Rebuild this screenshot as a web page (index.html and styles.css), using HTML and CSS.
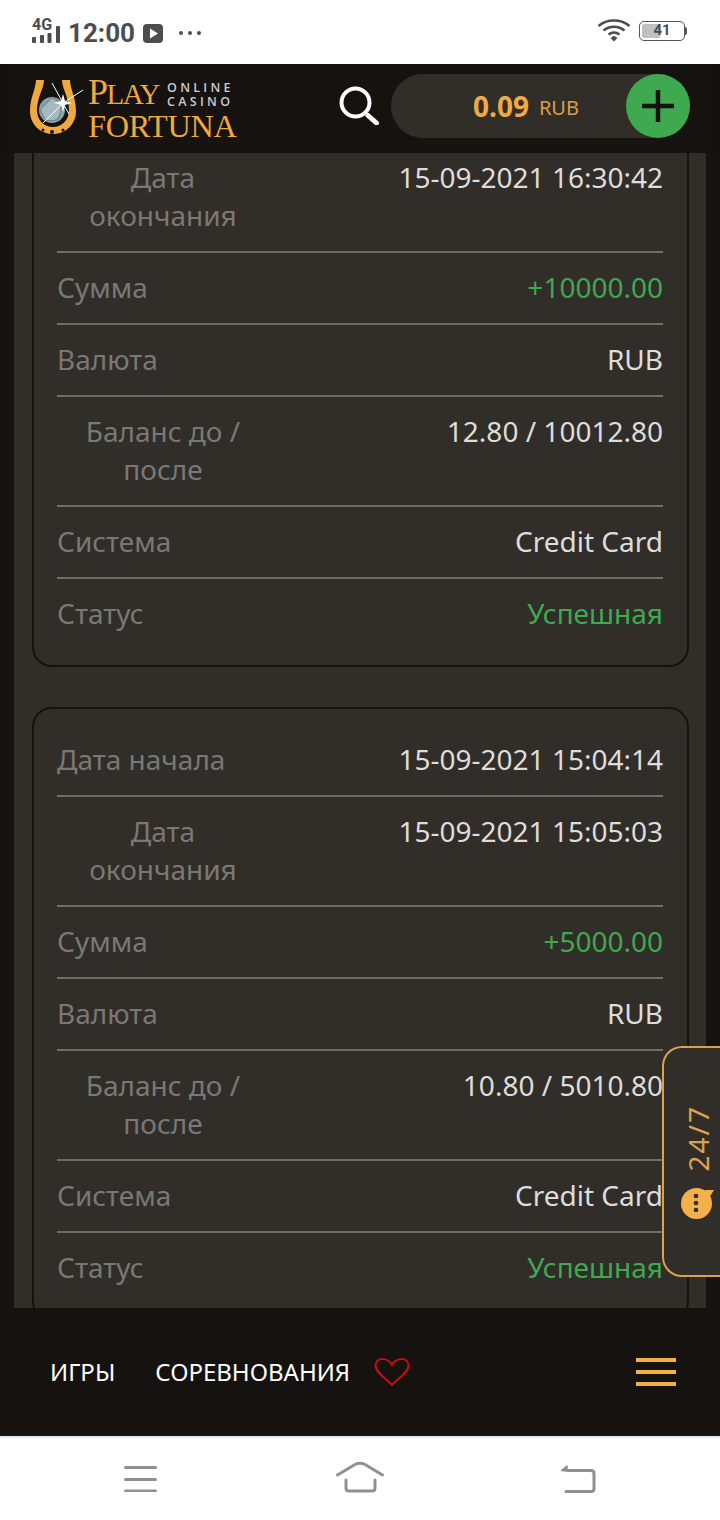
FILE: index.html
```html
<!DOCTYPE html>
<html lang="ru">
<head>
<meta charset="utf-8">
<title>Play Fortuna</title>
<link rel="stylesheet" href="styles.css">
</head>
<body>
<div class="phone">
  <div class="statusbar">
    <div class="status-left">
      <svg class="signal" width="30" height="26" viewBox="0 0 30 26">
        <text class="signal-text" x="0" y="11">4G</text>
        <rect x="0" y="18" width="4" height="6" rx="1"/>
        <rect x="8" y="16" width="4" height="8" rx="1"/>
        <rect x="15.500" y="14" width="4" height="10" rx="1"/>
        <rect x="24" y="7" width="4" height="17" rx="1"/>
      </svg>
      <span class="clock">12:00</span>
      <svg class="play" width="20" height="19" viewBox="0 0 20 19">
        <rect width="20" height="19" rx="4" fill="#4d4d4d"/>
        <path d="M7 4.500 15 9.500 7 14.500Z" fill="#fff"/>
      </svg>
      <svg class="dots" width="22" height="4" viewBox="0 0 22 4">
        <circle cx="2" cy="2" r="2"/><circle cx="11" cy="2" r="2"/><circle cx="20" cy="2" r="2"/>
      </svg>
    </div>
    <div class="status-right">
      <svg width="34" height="24" viewBox="0 0 34 24" fill="none" stroke="#4d4d4d" stroke-width="2.600">
        <path d="M1.500 8C10 .6 24 .6 32.500 8"/>
        <path d="M6.500 12.500C12.500 7.400 21.500 7.400 27.500 12.500"/>
        <path d="M11.500 16.500C15 14 19 14 22.500 16.500"/>
        <path d="M13.500 20 17 17.800 20.500 20 17 23.500Z" fill="#4d4d4d" stroke="none"/>
      </svg>
      <div class="battery"><span class="battery-fill"></span><span class="battery-num">41</span></div>
      <span class="battery-cap"></span>
    </div>
  </div>

  <div class="viewport">
    <main class="panel">
      <section class="card card-first">
        <div class="row"><span class="label">Дата начала</span><span class="value">15-09-2021 16:29:58</span></div>
        <div class="row"><span class="label">Дата окончания</span><span class="value">15-09-2021 16:30:42</span></div>
        <div class="row"><span class="label">Сумма</span><span class="value green">+10000.00</span></div>
        <div class="row"><span class="label">Валюта</span><span class="value">RUB</span></div>
        <div class="row"><span class="label">Баланс до / после</span><span class="value">12.80 / 10012.80</span></div>
        <div class="row"><span class="label">Система</span><span class="value">Credit Card</span></div>
        <div class="row"><span class="label">Статус</span><span class="value green">Успешная</span></div>
      </section>
      <section class="card">
        <div class="row"><span class="label">Дата начала</span><span class="value">15-09-2021 15:04:14</span></div>
        <div class="row"><span class="label">Дата окончания</span><span class="value">15-09-2021 15:05:03</span></div>
        <div class="row"><span class="label">Сумма</span><span class="value green">+5000.00</span></div>
        <div class="row"><span class="label">Валюта</span><span class="value">RUB</span></div>
        <div class="row"><span class="label">Баланс до / после</span><span class="value">10.80 / 5010.80</span></div>
        <div class="row"><span class="label">Система</span><span class="value">Credit Card</span></div>
        <div class="row"><span class="label">Статус</span><span class="value green">Успешная</span></div>
      </section>
    </main>

    <header class="topbar">
      <div class="logo">
        <svg class="shoe" width="46" height="56" viewBox="0 0 46 56">
          <path fill="#efa93f" d="M6 0H14C14 8 7 18 7 30C7 40 14 47 23 47C32 47 39 40 39 30C39 18 32 8 32 0H40C40 8 46 18 46 31C46 44 36 54 23 54C10 54 0 44 0 31C0 18 6 8 6 0Z"/>
          <circle cx="13" cy="50" r="1.500" fill="#15120f"/>
          <circle cx="22" cy="52" r="2" fill="#15120f"/>
          <circle cx="33" cy="50" r="1.500" fill="#15120f"/>
          <circle cx="22" cy="30" r="13" fill="#8a9fa6"/>
          <path d="M22 19 29 24 31 33 24 41 14 39 11 29Z" fill="#a6b9be"/>
          <path d="M22 17 33 23 28 40 16 41 10 30Z" fill="none" stroke="#6f858c" stroke-width="1"/>
          <path d="M22 3 33 23M53 10 33 23M13 43 33 23M39 34 33 23" stroke="#fff" stroke-width="1" fill="none"/>
          <path d="M33 14 35 21 42 23 35 25 33 32 31 25 24 23 31 21Z" fill="#fff"/>
        </svg>
        <div class="wordmark">
          <div class="word-top">
            <span class="word-play"><span class="big-p">P</span>LAY</span>
            <span class="word-sub"><span>ONLINE</span><span>CASINO</span></span>
          </div>
          <div class="word-fortuna">FORTUNA</div>
        </div>
      </div>
      <svg class="search" width="44" height="44" viewBox="0 0 44 44" fill="none" stroke="#fff" stroke-linecap="round">
        <circle cx="18.500" cy="21.500" r="14" stroke-width="4"/>
        <path d="M31 34.500 39.500 42" stroke-width="5"/>
      </svg>
      <div class="balance">
        <span class="amount">0.09</span>
        <span class="currency">RUB</span>
        <span class="add">
          <svg width="32" height="32" viewBox="0 0 32 32"><path d="M0 16H32M16 0V32" stroke="#15120f" stroke-width="4.500"/></svg>
        </span>
      </div>
    </header>

    <aside class="support">
      <span class="support-text">24/7</span>
      <svg width="33" height="33" viewBox="0 0 33 33">
        <circle cx="15.500" cy="17.500" r="15.500" fill="#f4b04b"/>
        <path d="M24 4H33L28 12Z" fill="#f4b04b"/>
        <circle cx="15" cy="10" r="2.300" fill="#312e2a"/><circle cx="15" cy="17" r="2.300" fill="#312e2a"/><circle cx="15" cy="24" r="2.300" fill="#312e2a"/>
      </svg>
    </aside>
  </div>

  <footer class="tabbar">
    <nav class="tabs">
      <a class="tab">ИГРЫ</a>
      <a class="tab">СОРЕВНОВАНИЯ</a>
      <svg class="heart" width="36" height="28" viewBox="0 0 36 28" fill="none" stroke="#c80d0d" stroke-width="2">
        <path d="M18 27C11 20 1.500 14 1.500 7.500C1.500 3.500 4.500 1 8.500 1C12.500 1 16 3.500 18 7C20 3.500 23.500 1 27.500 1C31.500 1 34.500 3.500 34.500 7.500C34.500 14 25 20 18 27Z"/>
      </svg>
    </nav>
    <div class="burger"><span></span><span></span><span></span></div>
  </footer>

  <div class="navbar">
    <svg width="33" height="26" viewBox="0 0 33 26" stroke="#909090" stroke-width="3" stroke-linecap="round"><path d="M1.500 1.500H31.500M1.500 13.500H31.500M1.500 25H31.500"/></svg>
    <svg class="nav-home" width="48" height="32" viewBox="0 0 48 32" fill="none" stroke="#909090" stroke-width="3" stroke-linecap="round" stroke-linejoin="round"><path d="M1.500 14 19 3.500Q24 1 29 3.500L46.500 14"/><path d="M10 19V27Q10 30 13 30H36Q39 30 39 27V19"/></svg>
    <svg width="36" height="28" viewBox="0 0 36 28" fill="none" stroke="#909090" stroke-width="3" stroke-linecap="round" stroke-linejoin="round"><path d="M8 5.500H31Q34 5.500 34 8.500V24Q34 26.500 31 26.500H6"/><path d="M7 1 1.500 5.500 7 6Z" fill="#909090" stroke-width="1.500"/></svg>
  </div>
</div>
</body>
</html>
```
FILE: styles.css
```css
* { box-sizing: border-box; }
html, body { margin: 0; padding: 0; }
body { background: #15120f; font-family: "Noto Sans", "Open Sans", sans-serif; }

.phone { width: 720px; height: 1520px; display: flex; flex-direction: column; overflow: hidden; }

/* status bar */
.statusbar { height: 64px; flex: none; background: #fff; display: flex; justify-content: space-between; align-items: center; padding: 0 33px 0 32px; color: #4d4d4d; }
.status-left, .status-right { display: flex; align-items: center; }
.signal { fill: #4d4d4d; overflow: visible; }
.signal-text { font: 700 16px Roboto, sans-serif; }
.clock { font: 700 26px/1 Roboto, sans-serif; margin-left: 6px; margin-top: 2px; }
.play { margin-left: 8px; margin-top: 2px; }
.dots { fill: #4d4d4d; margin-left: 16px; margin-top: 2px; }
.status-right svg { margin-right: 8px; margin-top: -4px; }
.battery { position: relative; width: 46px; height: 20px; border: 1.500px solid #555; border-radius: 5px; padding: 2px; display: flex; margin-top: -2px; }
.battery-fill { width: 18px; background: #c0c0c0; border-radius: 2px 0 0 2px; }
.battery-num { position: absolute; left: 0; right: 0; top: 0; text-align: center; font: 700 15px/17px Roboto, sans-serif; color: #4d4d4d; }
.battery-cap { width: 2px; height: 8px; background: #555; border-radius: 0 2px 2px 0; margin-top: -2px; }

/* scrolling area */
.viewport { position: relative; flex: 1; min-height: 0; overflow: hidden; }
.panel { height: 100%; margin: 0 14px; padding: 0 17px 0 18px; background: #312e2a; overflow: hidden; display: flex; flex-direction: column; gap: 40px; }
.card { flex: none; border: 2px solid #15120f; border-radius: 20px; padding: 16px 24px 16px 23px; }
.card-first { margin-top: -11px; }
.row { display: flex; justify-content: space-between; align-items: flex-start; padding: 15px 0 17px; border-bottom: 2px solid #6e6b68; font-size: 28px; line-height: 38px; }
.row:last-child { border-bottom: 0; }
.label { max-width: 212px; text-align: center; color: #7a7875; }
.value { text-align: right; color: #dedddb; white-space: nowrap; }
.value.green { color: #3fa950; }

/* top bar overlays the scrolling content */
.topbar { position: absolute; left: 0; top: 0; width: 100%; height: 89px; background: rgba(21, 18, 15, .97); display: flex; align-items: flex-start; padding: 10px 30px 0 30px; }
.logo { display: flex; flex: none; width: 307px; padding-top: 6px; }
.shoe { flex: none; overflow: visible; }
.wordmark { margin-left: 12px; font-family: "Liberation Serif", serif; color: #efa93f; }
.word-top { display: flex; align-items: flex-start; height: 34px; }
.word-play { font-size: 29px; line-height: 32px; width: 79px; margin-top: -4px; letter-spacing: -1.500px; }
.big-p { font-size: 36px; }
.word-sub { display: flex; flex-direction: column; font: 600 12.500px/13.500px "Open Sans", sans-serif; letter-spacing: 3.300px; color: #ccc; margin-top: 1px; }
.word-fortuna { font-size: 32.300px; line-height: 25px; letter-spacing: -.3px; }
.search { flex: none; margin-top: 7px; }
.balance { flex: none; margin-left: 10px; width: 299px; height: 64px; border-radius: 32px; background: #312e2a; display: flex; align-items: center; padding-left: 82px; }
.amount { font-size: 28px; font-weight: 700; color: #f0aa43; }
.currency { font-size: 20px; color: #dd9f42; margin-left: 10px; margin-top: 2px; }
.add { width: 64px; height: 64px; border-radius: 50%; background: #3fa950; display: flex; align-items: center; justify-content: center; margin-left: auto; }

/* support tab */
.support { position: absolute; right: 0; top: 982px; width: 58px; height: 231px; background: #312e2a; border: 2px solid #dca24b; border-right: 0; border-radius: 20px 0 0 20px; display: flex; flex-direction: column; align-items: center; padding: 57px 0 0 11px; gap: 15px; }
.support-text { writing-mode: vertical-rl; transform: rotate(180deg); font-size: 28px; line-height: 30px; color: #dca24b; letter-spacing: 2px; }

/* bottom bar */
.tabbar { height: 128px; flex: none; background: #15120f; display: flex; align-items: center; justify-content: space-between; padding: 0 44px 0 50px; }
.tabs { display: flex; align-items: center; }
.tab { color: #fff; font-size: 24px; line-height: 32px; margin-right: 40px; }
.tab:nth-child(2) { margin-right: 24px; }
.burger { display: flex; flex-direction: column; gap: 8px; width: 40px; }
.burger span { height: 4px; background: #f4ae46; }

/* android nav */
.navbar { height: 84px; flex: none; background: #fff; border-top: 2px solid #e8e8e8; display: flex; justify-content: space-between; align-items: center; padding: 0 124px 0 124px; }
.nav-home { margin-top: -4px; margin-left: 3px; }
```
